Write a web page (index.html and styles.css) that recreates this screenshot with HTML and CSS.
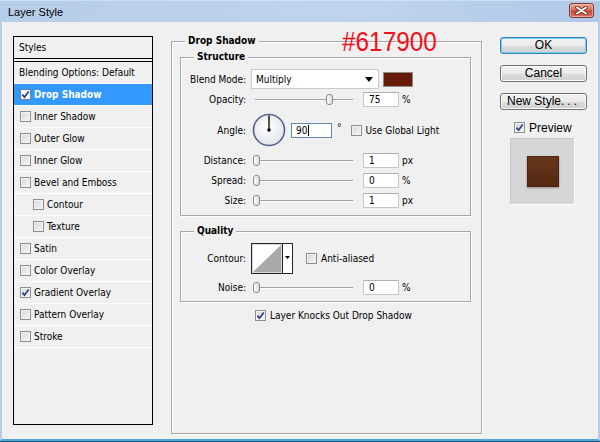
FILE: index.html
```html
<!DOCTYPE html>
<html lang="en">
<head>
  <meta charset="UTF-8">
  <meta name="viewport" content="width=device-width, initial-scale=1.0">
  <title>Layer Style</title>
  <link rel="stylesheet" href="styles.css">
</head>
<body>
  <div class="window">
    <div class="titlebar">
      <span class="title">Layer Style</span>
      <button class="close" aria-label="Close">
        <svg width="13" height="9" viewBox="0 0 13 9">
          <path d="M2 1.5 L11 7.5 M11 1.5 L2 7.5" stroke="#6b2a22" stroke-width="3.6" stroke-linecap="round"/>
          <path d="M2 1.5 L11 7.5 M11 1.5 L2 7.5" stroke="#fff" stroke-width="2" stroke-linecap="round"/>
        </svg>
      </button>
    </div>

    <div class="content">
      <!-- styles list -->
      <div class="styles-panel">
        <div class="styles-head">Styles</div>
        <ul class="styles-list">
          <li class="item plain">Blending Options: Default</li>
          <li class="item selected"><span class="cb"><svg width="9" height="9" viewBox="0 0 9 9"><path d="M1.4 4.6 L3.5 7.2 L7.7 1.4" fill="none" stroke="#2b3c8f" stroke-width="1.7"/></svg></span>Drop Shadow</li>
          <li class="item"><span class="cb"></span>Inner Shadow</li>
          <li class="item"><span class="cb"></span>Outer Glow</li>
          <li class="item"><span class="cb"></span>Inner Glow</li>
          <li class="item"><span class="cb"></span>Bevel and Emboss</li>
          <li class="item sub"><span class="cb"></span>Contour</li>
          <li class="item sub"><span class="cb"></span>Texture</li>
          <li class="item"><span class="cb"></span>Satin</li>
          <li class="item"><span class="cb"></span>Color Overlay</li>
          <li class="item"><span class="cb"><svg width="9" height="9" viewBox="0 0 9 9"><path d="M1.4 4.6 L3.5 7.2 L7.7 1.4" fill="none" stroke="#2b3c8f" stroke-width="1.7"/></svg></span>Gradient Overlay</li>
          <li class="item"><span class="cb"></span>Pattern Overlay</li>
          <li class="item"><span class="cb"></span>Stroke</li>
        </ul>
      </div>

      <!-- drop shadow settings -->
      <fieldset class="group main">
        <legend>Drop Shadow</legend>

        <fieldset class="group sub">
          <legend>Structure</legend>
          <div class="row blend">
            <span class="label">Blend Mode:</span>
            <div class="select">
              <span>Multiply</span>
              <svg width="8" height="5" viewBox="0 0 8 5"><path d="M0 0 H8 L4 5 Z" fill="#000"/></svg>
            </div>
            <span class="swatch"></span>
          </div>
          <div class="row opacity">
            <span class="label">Opacity:</span>
            <div class="slider"><span class="thumb" style="margin-left:75px"></span></div>
            <span class="field">75</span>
            <span class="unit">%</span>
          </div>
          <div class="row angle">
            <span class="label">Angle:</span>
            <svg class="dial" width="34" height="34" viewBox="0 0 34 34">
              <defs>
                <radialGradient id="dialFill" cx="45%" cy="40%" r="65%">
                  <stop offset="0" stop-color="#ffffff"/>
                  <stop offset="1" stop-color="#e2e2e8"/>
                </radialGradient>
              </defs>
              <circle cx="17" cy="17" r="15.5" fill="url(#dialFill)" stroke="#53638b" stroke-width="1.6"/>
              <line x1="17" y1="17" x2="17" y2="2.5" stroke="#1b1b1b" stroke-width="1.5"/>
              <circle cx="17" cy="17" r="1.8" fill="#000"/>
            </svg>
            <span class="field focused">90<span class="caret"></span></span>
            <span class="degree">°</span>
            <span class="cb global"></span>
            <span class="cb-text">Use Global Light</span>
          </div>
          <div class="row slim">
            <span class="label">Distance:</span>
            <div class="slider"><span class="thumb" style="margin-left:2px"></span></div>
            <span class="field">1</span>
            <span class="unit">px</span>
          </div>
          <div class="row slim">
            <span class="label">Spread:</span>
            <div class="slider"><span class="thumb" style="margin-left:2px"></span></div>
            <span class="field">0</span>
            <span class="unit">%</span>
          </div>
          <div class="row slim">
            <span class="label">Size:</span>
            <div class="slider"><span class="thumb" style="margin-left:2px"></span></div>
            <span class="field">1</span>
            <span class="unit">px</span>
          </div>
        </fieldset>

        <fieldset class="group sub quality">
          <legend>Quality</legend>
          <div class="row contour">
            <span class="label">Contour:</span>
            <svg width="42" height="31" viewBox="0 0 42 31">
              <rect x="0.5" y="0.5" width="41" height="30" fill="#fff" stroke="#262626"/>
              <rect x="1.5" y="1.5" width="29" height="28" fill="none" stroke="#d8d8d8"/>
              <polygon points="2,29 30,2 30,29" fill="#a8a8a8"/>
              <line x1="31.5" y1="1" x2="31.5" y2="30" stroke="#262626"/>
              <polygon points="34,13 39,13 36.5,16" fill="#000"/>
            </svg>
            <span class="cb anti"></span>
            <span class="cb-text">Anti-aliased</span>
          </div>
          <div class="row slim noise">
            <span class="label">Noise:</span>
            <div class="slider"><span class="thumb" style="margin-left:2px"></span></div>
            <span class="field">0</span>
            <span class="unit">%</span>
          </div>
        </fieldset>

        <div class="knockout">
          <span class="cb"><svg width="9" height="9" viewBox="0 0 9 9"><path d="M1.4 4.6 L3.5 7.2 L7.7 1.4" fill="none" stroke="#2b3c8f" stroke-width="1.7"/></svg></span>
          <span class="cb-text">Layer Knocks Out Drop Shadow</span>
        </div>
      </fieldset>

      <!-- buttons and preview -->
      <div class="actions">
        <button class="btn default">OK</button>
        <button class="btn">Cancel</button>
        <button class="btn">New Style<span class="dots">...</span></button>
        <label class="preview-toggle">
          <span class="cb"><svg width="9" height="9" viewBox="0 0 9 9"><path d="M1.4 4.6 L3.5 7.2 L7.7 1.4" fill="none" stroke="#2b3c8f" stroke-width="1.7"/></svg></span>
          Preview
        </label>
        <div class="preview">
          <div class="preview-swatch"></div>
        </div>
      </div>
    </div>

    <div class="note">#617900</div>
  </div>
</body>
</html>
```

FILE: styles.css
```css
* {
  box-sizing: border-box;
}
body {
  margin: 0;
  background: #f0f0f0;
  font-family: "DejaVu Sans Condensed", "DejaVu Sans", sans-serif;
  font-size: 10px;
  color: #000;
}
.window {
  position: relative;
  width: 600px;
  height: 442px;
  display: flex;
  flex-direction: column;
  border-bottom: 1px solid #2b527f;
}

/* title bar */
.titlebar {
  height: 22px;
  flex: none;
  display: flex;
  align-items: center;
  justify-content: space-between;
  padding: 0 6px 0 8px;
  background: linear-gradient(90deg, #b6cde9 0%, #bfd4ec 60%, #b0c9e8 100%);
  border-top: 1px solid #cfdff2;
}
.title {
  font-family: "Liberation Sans", Arial, sans-serif;
  font-size: 11px;
  color: #000;
}
.close {
  width: 25px;
  height: 15px;
  margin-top: -2px;
  padding: 0;
  display: flex;
  align-items: center;
  justify-content: center;
  border: 1px solid #7e3a32;
  border-radius: 3px;
  background: linear-gradient(#e9a597 0%, #d66b5c 48%, #c4402f 52%, #d9766a 100%);
  box-shadow: inset 0 0 0 1px rgba(255, 220, 210, 0.5);
}
.close svg {
  display: block;
}

/* dialog body */
.content {
  flex: 1;
  display: flex;
  align-items: flex-start;
  padding: 13px 0 0 11px;
  background: #f0f0f0;
  border-left: 2px solid #b7cde8;
  border-right: 2px solid #b7cde8;
  border-bottom: 2px solid #4aa8dc;
}

/* checkboxes */
.cb {
  width: 11px;
  height: 11px;
  flex: none;
  display: flex;
  align-items: center;
  justify-content: center;
  border: 1px solid #8e8f8f;
  background: linear-gradient(135deg, #d6d6d6 0%, #f8f8f8 100%);
  box-shadow: inset 0 0 0 1px #f2f2f2;
}
.cb svg {
  display: block;
}
.cb-text {
  margin-left: 4px;
}

/* left styles list */
.styles-panel {
  width: 140px;
  height: 389px;
  flex: none;
  margin-top: 1px;
  border: 1px solid #000;
}
.styles-head {
  height: 22px;
  line-height: 21px;
  padding-left: 5px;
  border-bottom: 1px solid #000;
  margin-bottom: 2px;
}
.styles-list {
  list-style: none;
  margin: 0;
  padding: 0;
  border-top: 1px solid #000;
}
.item {
  height: 22px;
  display: flex;
  align-items: center;
  gap: 3px;
  padding-left: 6px;
  border-bottom: 1px solid #fff;
}
.item.plain {
  padding-left: 5px;
}
.item.sub {
  padding-left: 19px;
}
.item.selected {
  background: #3399ff;
  color: #fff;
  font-weight: bold;
}
.item.selected .cb {
  background: #fff;
  border-color: #6d7fa8;
}

/* group boxes */
.group {
  margin: 0;
  border: 1px solid #a6a6a6;
  box-shadow: inset 1px 1px 0 #fff, 1px 1px 0 #fff;
}
.group legend {
  font-weight: bold;
  line-height: 12px;
  padding: 0 3px;
  background: #f0f0f0;
}
.group.main {
  width: 311px;
  height: 399px;
  flex: none;
  margin-left: 18px;
  padding: 4px 10px 0 8px;
}
.group.main > legend {
  margin-left: 5px;
}
.group.sub {
  padding: 6px 0 7px 0;
}
.group.sub > legend {
  margin-left: 13px;
}
.group.quality {
  margin-top: 9px;
  padding-bottom: 6px;
}

/* settings rows */
.row {
  display: flex;
  align-items: center;
}
.label {
  width: 65px;
  flex: none;
  text-align: right;
  margin-right: 5px;
}
.row.blend {
  height: 20px;
}
.row.opacity {
  height: 15px;
  margin-top: 3px;
}
.row.angle {
  height: 34px;
  margin-top: 6px;
}
.row.slim {
  height: 15px;
  margin-top: 5px;
}
.row.angle + .row.slim {
  margin-top: 6px;
}
.row.noise {
  margin-top: 6px;
}
.select {
  width: 128px;
  height: 20px;
  display: flex;
  align-items: center;
  justify-content: space-between;
  padding: 0 5px 0 4px;
  background: #fff;
  border: 1px solid #c9c9c9;
}
.select svg {
  display: block;
}
.swatch {
  width: 30px;
  height: 15px;
  margin-left: 4px;
  background: #661b09;
  border: 1px solid #8a8a8a;
}
.slider {
  width: 104px;
  height: 15px;
  flex: none;
  display: flex;
  align-items: center;
  background:
    linear-gradient(#a3a3a3, #a3a3a3) no-repeat 4px 7px / 98px 1px,
    linear-gradient(#ffffff, #ffffff) no-repeat 4px 8px / 98px 1px;
}
.thumb {
  width: 7px;
  height: 11px;
  border: 1px solid #8b8b8b;
  border-radius: 3px;
  background: linear-gradient(90deg, #ffffff, #d9d9d9);
}
.field {
  width: 36px;
  height: 15px;
  margin-left: 8px;
  display: flex;
  align-items: center;
  padding-left: 5px;
  background: #fff;
  border: 1px solid #c6c6c6;
  border-top-color: #b0b0b0;
}
.field.focused {
  width: 41px;
  margin-left: 5px;
  padding-left: 4px;
  border-color: #5d88b8;
}
.caret {
  width: 1px;
  height: 11px;
  margin-left: 1px;
  background: #000;
}
.unit {
  margin-left: 3px;
}
.dial {
  flex: none;
  margin-left: 1px;
}
.degree {
  margin-left: 5px;
  align-self: flex-start;
  margin-top: 9px;
}
.cb.global {
  margin-left: 9px;
}
.row.contour {
  height: 31px;
}
.row.contour svg {
  display: block;
  flex: none;
}
.cb.anti {
  margin-left: 13px;
}
.knockout {
  display: flex;
  align-items: center;
  height: 13px;
  margin-top: 7px;
  padding-left: 75px;
}

/* right column */
.actions {
  width: 87px;
  flex: none;
  margin-left: 18px;
  margin-top: 2px;
  display: flex;
  flex-direction: column;
}
.btn {
  height: 17px;
  margin: 0 0 11px 0;
  padding: 0;
  font-family: "Liberation Sans", Arial, sans-serif;
  font-size: 12px;
  color: #000;
  line-height: 15px;
  border: 1px solid #707070;
  border-radius: 3px;
  background: linear-gradient(#f2f2f2 0%, #ebebeb 50%, #dddddd 51%, #cfcfcf 100%);
  box-shadow: inset 0 0 0 1px #fcfcfc;
}
.btn.default {
  border-color: #3c7fb1;
  box-shadow: inset 0 0 0 1px #6fd0f5;
}
.dots {
  letter-spacing: 3px;
}
.preview-toggle {
  height: 13px;
  display: flex;
  align-items: center;
  gap: 4px;
  padding-left: 14px;
  font-family: "Liberation Sans", Arial, sans-serif;
  font-size: 12px;
}
.preview {
  width: 65px;
  height: 67px;
  margin: 4px 0 0 10px;
  display: flex;
  align-items: center;
  justify-content: center;
  background: #d6d6d6;
  border: 1px solid #fff;
  border-top-color: #cacaca;
  border-left-color: #cacaca;
}
.preview-swatch {
  width: 32px;
  height: 31px;
  background: linear-gradient(#66351b, #572912);
  border: 1px solid #4b240f;
  box-shadow: 0 1px 2px rgba(0, 0, 0, 0.35);
}

/* annotation over the dialog */
.note {
  position: absolute;
  left: 342px;
  top: 28px;
  font-family: "Liberation Sans", Arial, sans-serif;
  font-size: 28px;
  line-height: 28px;
  color: #f3101a;
  transform: scaleX(0.87);
  transform-origin: left top;
}
```
